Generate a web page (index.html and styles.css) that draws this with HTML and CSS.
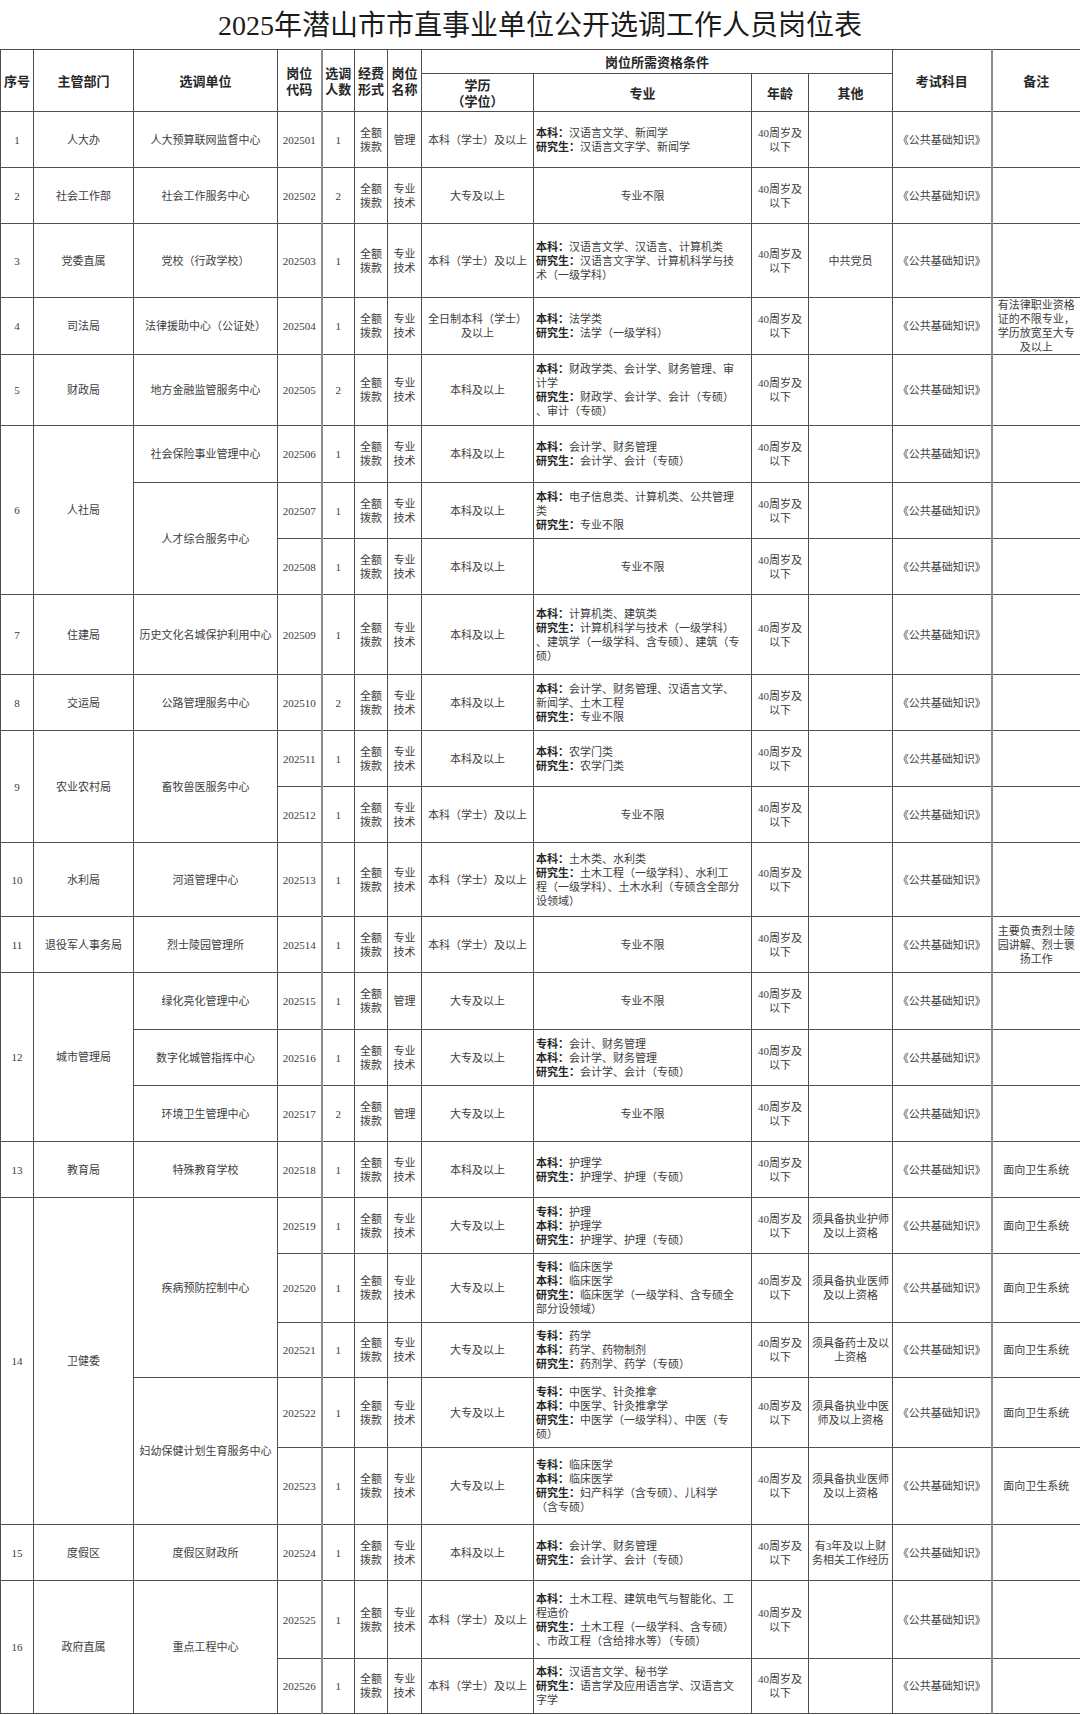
FILE: index.html
```html
<!DOCTYPE html>
<html lang="zh-CN">
<head>
<meta charset="utf-8">
<title>2025年潜山市市直事业单位公开选调工作人员岗位表</title>
<link rel="stylesheet" href="styles.css">
</head>
<body>
<h1 class="title">2025年潜山市市直事业单位公开选调工作人员岗位表</h1>
<table class="grid">
<colgroup>
<col class="w-no"><col class="w-dept"><col class="w-unit"><col class="w-code"><col class="w-num sep"><col class="w-fund"><col class="w-post"><col class="w-edu"><col class="w-major"><col class="w-age"><col class="w-other"><col class="w-exam"><col class="w-note sep">
</colgroup>
<thead>
<tr class="h24">
<th rowspan="2">序号</th><th rowspan="2">主管部门</th><th rowspan="2">选调单位</th><th rowspan="2">岗位<br>代码</th><th rowspan="2">选调<br>人数</th><th rowspan="2">经费<br>形式</th><th rowspan="2">岗位<br>名称</th><th colspan="4">岗位所需资格条件</th><th rowspan="2">考试科目</th><th rowspan="2">备注</th>
</tr>
<tr class="h38">
<th>学历<br>（学位）</th><th>专业</th><th>年龄</th><th>其他</th>
</tr>
</thead>
<tbody>
<tr class="h56">
<td>1</td><td>人大办</td><td>人大预算联网监督中心</td><td>202501</td><td>1</td><td>全额拨款</td><td>管理</td><td>本科（学士）及以上</td>
<td class="m"><b>本科：</b>汉语言文学、新闻学<br><b>研究生：</b>汉语言文字学、新闻学</td>
<td>40周岁及以下</td><td></td><td>《公共基础知识》</td><td></td>
</tr>
<tr class="h56">
<td>2</td><td>社会工作部</td><td>社会工作服务中心</td><td>202502</td><td>2</td><td>全额拨款</td><td>专业技术</td><td>大专及以上</td>
<td>专业不限</td>
<td>40周岁及以下</td><td></td><td>《公共基础知识》</td><td></td>
</tr>
<tr class="h74">
<td>3</td><td>党委直属</td><td>党校（行政学校）</td><td>202503</td><td>1</td><td>全额拨款</td><td>专业技术</td><td>本科（学士）及以上</td>
<td class="m"><b>本科：</b>汉语言文学、汉语言、计算机类<br><b>研究生：</b>汉语言文字学、计算机科学与技<br>术（一级学科）</td>
<td>40周岁及以下</td><td>中共党员</td><td>《公共基础知识》</td><td></td>
</tr>
<tr class="h57">
<td>4</td><td>司法局</td><td>法律援助中心（公证处）</td><td>202504</td><td>1</td><td>全额拨款</td><td>专业技术</td><td>全日制本科（学士）及以上</td>
<td class="m"><b>本科：</b>法学类<br><b>研究生：</b>法学（一级学科）</td>
<td>40周岁及以下</td><td></td><td>《公共基础知识》</td><td class="note">有法律职业资格证的不限专业，学历放宽至大专及以上</td>
</tr>
<tr class="h71">
<td>5</td><td>财政局</td><td>地方金融监管服务中心</td><td>202505</td><td>2</td><td>全额拨款</td><td>专业技术</td><td>本科及以上</td>
<td class="m"><b>本科：</b>财政学类、会计学、财务管理、审<br>计学<br><b>研究生：</b>财政学、会计学、会计（专硕）<br>、审计（专硕）</td>
<td>40周岁及以下</td><td></td><td>《公共基础知识》</td><td></td>
</tr>
<tr class="h57">
<td rowspan="3">6</td><td rowspan="3">人社局</td><td>社会保险事业管理中心</td><td>202506</td><td>1</td><td>全额拨款</td><td>专业技术</td><td>本科及以上</td>
<td class="m"><b>本科：</b>会计学、财务管理<br><b>研究生：</b>会计学、会计（专硕）</td>
<td>40周岁及以下</td><td></td><td>《公共基础知识》</td><td></td>
</tr>
<tr class="h56">
<td rowspan="2">人才综合服务中心</td><td>202507</td><td>1</td><td>全额拨款</td><td>专业技术</td><td>本科及以上</td>
<td class="m"><b>本科：</b>电子信息类、计算机类、公共管理<br>类<br><b>研究生：</b>专业不限</td>
<td>40周岁及以下</td><td></td><td>《公共基础知识》</td><td></td>
</tr>
<tr class="h56">
<td>202508</td><td>1</td><td>全额拨款</td><td>专业技术</td><td>本科及以上</td>
<td>专业不限</td>
<td>40周岁及以下</td><td></td><td>《公共基础知识》</td><td></td>
</tr>
<tr class="h80">
<td>7</td><td>住建局</td><td>历史文化名城保护利用中心</td><td>202509</td><td>1</td><td>全额拨款</td><td>专业技术</td><td>本科及以上</td>
<td class="m"><b>本科：</b>计算机类、建筑类<br><b>研究生：</b>计算机科学与技术（一级学科）<br>、建筑学（一级学科、含专硕）、建筑（专<br>硕）</td>
<td>40周岁及以下</td><td></td><td>《公共基础知识》</td><td></td>
</tr>
<tr class="h56">
<td>8</td><td>交运局</td><td>公路管理服务中心</td><td>202510</td><td>2</td><td>全额拨款</td><td>专业技术</td><td>本科及以上</td>
<td class="m"><b>本科：</b>会计学、财务管理、汉语言文学、<br>新闻学、土木工程<br><b>研究生：</b>专业不限</td>
<td>40周岁及以下</td><td></td><td>《公共基础知识》</td><td></td>
</tr>
<tr class="h56">
<td rowspan="2">9</td><td rowspan="2">农业农村局</td><td rowspan="2">畜牧兽医服务中心</td><td>202511</td><td>1</td><td>全额拨款</td><td>专业技术</td><td>本科及以上</td>
<td class="m"><b>本科：</b>农学门类<br><b>研究生：</b>农学门类</td>
<td>40周岁及以下</td><td></td><td>《公共基础知识》</td><td></td>
</tr>
<tr class="h56">
<td>202512</td><td>1</td><td>全额拨款</td><td>专业技术</td><td>本科（学士）及以上</td>
<td>专业不限</td>
<td>40周岁及以下</td><td></td><td>《公共基础知识》</td><td></td>
</tr>
<tr class="h74">
<td>10</td><td>水利局</td><td>河道管理中心</td><td>202513</td><td>1</td><td>全额拨款</td><td>专业技术</td><td>本科（学士）及以上</td>
<td class="m"><b>本科：</b>土木类、水利类<br><b>研究生：</b>土木工程（一级学科）、水利工<br>程（一级学科）、土木水利（专硕含全部分<br>设领域）</td>
<td>40周岁及以下</td><td></td><td>《公共基础知识》</td><td></td>
</tr>
<tr class="h56">
<td>11</td><td>退役军人事务局</td><td>烈士陵园管理所</td><td>202514</td><td>1</td><td>全额拨款</td><td>专业技术</td><td>本科（学士）及以上</td>
<td>专业不限</td>
<td>40周岁及以下</td><td></td><td>《公共基础知识》</td><td class="note">主要负责烈士陵园讲解、烈士褒扬工作</td>
</tr>
<tr class="h57">
<td rowspan="3">12</td><td rowspan="3">城市管理局</td><td>绿化亮化管理中心</td><td>202515</td><td>1</td><td>全额拨款</td><td>管理</td><td>大专及以上</td>
<td>专业不限</td>
<td>40周岁及以下</td><td></td><td>《公共基础知识》</td><td></td>
</tr>
<tr class="h56">
<td>数字化城管指挥中心</td><td>202516</td><td>1</td><td>全额拨款</td><td>专业技术</td><td>大专及以上</td>
<td class="m"><b>专科：</b>会计、财务管理<br><b>本科：</b>会计学、财务管理<br><b>研究生：</b>会计学、会计（专硕）</td>
<td>40周岁及以下</td><td></td><td>《公共基础知识》</td><td></td>
</tr>
<tr class="h56">
<td>环境卫生管理中心</td><td>202517</td><td>2</td><td>全额拨款</td><td>管理</td><td>大专及以上</td>
<td>专业不限</td>
<td>40周岁及以下</td><td></td><td>《公共基础知识》</td><td></td>
</tr>
<tr class="h56">
<td>13</td><td>教育局</td><td>特殊教育学校</td><td>202518</td><td>1</td><td>全额拨款</td><td>专业技术</td><td>本科及以上</td>
<td class="m"><b>本科：</b>护理学<br><b>研究生：</b>护理学、护理（专硕）</td>
<td>40周岁及以下</td><td></td><td>《公共基础知识》</td><td>面向卫生系统</td>
</tr>
<tr class="h56">
<td rowspan="5">14</td><td rowspan="5">卫健委</td><td rowspan="3">疾病预防控制中心</td><td>202519</td><td>1</td><td>全额拨款</td><td>专业技术</td><td>大专及以上</td>
<td class="m"><b>专科：</b>护理<br><b>本科：</b>护理学<br><b>研究生：</b>护理学、护理（专硕）</td>
<td>40周岁及以下</td><td>须具备执业护师及以上资格</td><td>《公共基础知识》</td><td>面向卫生系统</td>
</tr>
<tr class="h69">
<td>202520</td><td>1</td><td>全额拨款</td><td>专业技术</td><td>大专及以上</td>
<td class="m"><b>专科：</b>临床医学<br><b>本科：</b>临床医学<br><b>研究生：</b>临床医学（一级学科、含专硕全<br>部分设领域）</td>
<td>40周岁及以下</td><td>须具备执业医师及以上资格</td><td>《公共基础知识》</td><td>面向卫生系统</td>
</tr>
<tr class="h55">
<td>202521</td><td>1</td><td>全额拨款</td><td>专业技术</td><td>大专及以上</td>
<td class="m"><b>专科：</b>药学<br><b>本科：</b>药学、药物制剂<br><b>研究生：</b>药剂学、药学（专硕）</td>
<td>40周岁及以下</td><td>须具备药士及以上资格</td><td>《公共基础知识》</td><td>面向卫生系统</td>
</tr>
<tr class="h70">
<td rowspan="2">妇幼保健计划生育服务中心</td><td>202522</td><td>1</td><td>全额拨款</td><td>专业技术</td><td>大专及以上</td>
<td class="m"><b>专科：</b>中医学、针灸推拿<br><b>本科：</b>中医学、针灸推拿学<br><b>研究生：</b>中医学（一级学科）、中医（专<br>硕）</td>
<td>40周岁及以下</td><td>须具备执业中医师及以上资格</td><td>《公共基础知识》</td><td>面向卫生系统</td>
</tr>
<tr class="h77">
<td>202523</td><td>1</td><td>全额拨款</td><td>专业技术</td><td>大专及以上</td>
<td class="m"><b>专科：</b>临床医学<br><b>本科：</b>临床医学<br><b>研究生：</b>妇产科学（含专硕）、儿科学<br>（含专硕）</td>
<td>40周岁及以下</td><td>须具备执业医师及以上资格</td><td>《公共基础知识》</td><td>面向卫生系统</td>
</tr>
<tr class="h56">
<td>15</td><td>度假区</td><td>度假区财政所</td><td>202524</td><td>1</td><td>全额拨款</td><td>专业技术</td><td>本科及以上</td>
<td class="m"><b>本科：</b>会计学、财务管理<br><b>研究生：</b>会计学、会计（专硕）</td>
<td>40周岁及以下</td><td>有3年及以上财务相关工作经历</td><td>《公共基础知识》</td><td></td>
</tr>
<tr class="h78">
<td rowspan="2">16</td><td rowspan="2">政府直属</td><td rowspan="2">重点工程中心</td><td>202525</td><td>1</td><td>全额拨款</td><td>专业技术</td><td>本科（学士）及以上</td>
<td class="m"><b>本科：</b>土木工程、建筑电气与智能化、工<br>程造价<br><b>研究生：</b>土木工程（一级学科、含专硕）<br>、市政工程（含给排水等）（专硕）</td>
<td>40周岁及以下</td><td></td><td>《公共基础知识》</td><td></td>
</tr>
<tr class="h55">
<td>202526</td><td>1</td><td>全额拨款</td><td>专业技术</td><td>本科（学士）及以上</td>
<td class="m"><b>本科：</b>汉语言文学、秘书学<br><b>研究生：</b>语言学及应用语言学、汉语言文<br>字学</td>
<td>40周岁及以下</td><td></td><td>《公共基础知识》</td><td></td>
</tr>
</tbody>
</table>
</body>
</html>
```

FILE: styles.css
```css
html, body {
  margin: 0;
  padding: 0;
  background: #ffffff;
}

body {
  width: 1080px;
  color: #3d3d3d;
  font-family: "Liberation Serif", "Noto Sans CJK SC", serif;
}

.title {
  margin: 0;
  height: 49px;
  line-height: 52px;
  text-align: center;
  font-size: 28px;
  font-weight: normal;
  color: #1b1b1b;
  white-space: nowrap;
  font-family: "Liberation Serif", "Noto Sans CJK SC", serif;
}

.grid {
  width: 1080px;
  border-collapse: collapse;
  table-layout: fixed;
}

.w-no { width: 33px; }
.w-dept { width: 100px; }
.w-unit { width: 144px; }
.w-code { width: 44px; }
.w-num { width: 33px; }
.w-fund { width: 33px; }
.w-post { width: 34px; }
.w-edu { width: 112px; }
.w-major { width: 218px; }
.w-age { width: 57px; }
.w-other { width: 84px; }
.w-exam { width: 99px; }
.w-note { width: 89px; }

.sep {
  border-left: 2px solid #8c8c8c;
}

.grid th,
.grid td {
  border: 1px solid #4f4f4f;
  padding: 0 2px;
  text-align: center;
  vertical-align: middle;
  font-size: 11px;
  line-height: 14px;
  overflow: hidden;
}

.grid th {
  font-family: "Noto Sans CJK SC", sans-serif;
  font-size: 13px;
  line-height: 16px;
  font-weight: 700;
  color: #262626;
}

.grid td.m {
  text-align: left;
  white-space: nowrap;
}

.grid td.m b {
  font-weight: 700;
  color: #262626;
}

.grid td.note {
  line-height: 14px;
}

.h24 { height: 24px; }
.h38 { height: 38px; }
.h55 { height: 55px; }
.h56 { height: 56px; }
.h57 { height: 57px; }
.h69 { height: 69px; }
.h70 { height: 70px; }
.h71 { height: 71px; }
.h74 { height: 74px; }
.h77 { height: 77px; }
.h78 { height: 78px; }
.h80 { height: 80px; }
```
